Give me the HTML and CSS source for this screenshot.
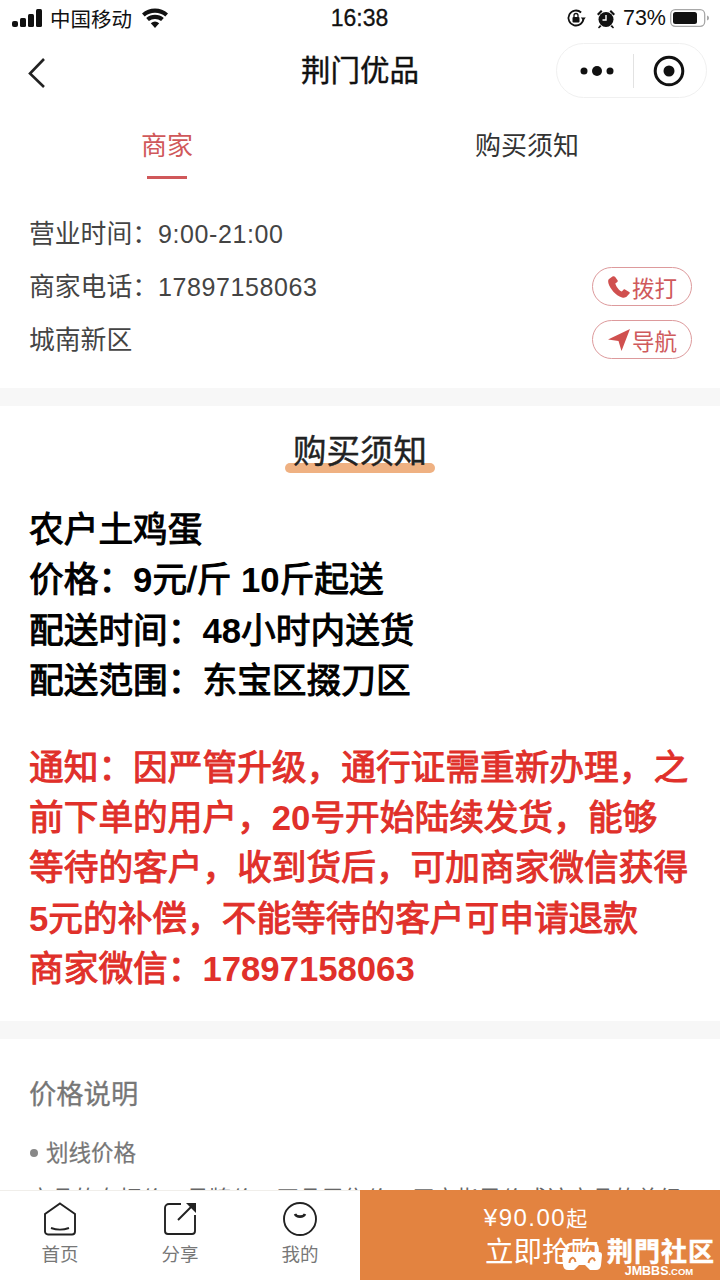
FILE: index.html
```html
<!DOCTYPE html>
<html lang="zh-CN">
<head>
  <meta charset="UTF-8" />
  <meta name="viewport" content="width=device-width, initial-scale=1" />
  <title>荆门优品</title>
  <link rel="stylesheet" href="styles.css">
</head>
<body>

  <div class="statusbar">
    <div class="status-left">
      <svg class="signal" width="30" height="18" viewBox="0 0 30 18">
        <rect x="0" y="12" width="6" height="6" rx="2" />
        <rect x="8" y="9" width="6" height="9" rx="1.500" />
        <rect x="16" y="5" width="6" height="13" rx="1.500" />
        <rect x="24" y="0" width="6" height="18" rx="1.500" />
      </svg>
      <span>中国移动</span>
      <svg class="wifi" width="28" height="20" viewBox="0 0 28 20">
        <path d="M14 20l-4.200-4.700a6.500 6.500 0 0 1 8.400 0z" />
        <path d="M7.900 13.100l-2.700-3a13.500 13.500 0 0 1 17.600 0l-2.700 3a9.500 9.500 0 0 0-12.200 0z" />
        <path d="M3.700 8.400L1 5.400a20 20 0 0 1 26 0l-2.700 3a16 16 0 0 0-20.600 0z" />
      </svg>
    </div>
    <div class="status-time">16:38</div>
    <div class="status-right">
      <svg width="20" height="20" viewBox="0 0 20 20">
        <path d="M17.500 10a7.500 7.500 0 1 1-2.400-5.500" fill="none" stroke="#111" stroke-width="1.800" />
        <path d="M19.800 9.500h-5l2.500 3z" fill="#111" />
        <rect x="6.500" y="9" width="7" height="5.500" rx="1" fill="#111" />
        <path d="M8 9V7.500a2 2 0 0 1 4 0V9" fill="none" stroke="#111" stroke-width="1.300" />
      </svg>
      <svg class="alarm" width="20" height="21" viewBox="0 0 20 21">
        <circle cx="10" cy="11.500" r="7.500" fill="#111" />
        <path d="M1 6l4-4 1.500 1.500-4 4zM19 6l-4-4-1.500 1.500 4 4zM4 17l-2 2.500 1 1 2.500-2.200zM16 17l2 2.500-1 1-2.500-2.200z" fill="#111" />
        <path d="M10 7v5H6.500" fill="none" stroke="#fff" stroke-width="1.400" />
      </svg>
      <span>73%</span>
      <svg width="40" height="18" viewBox="0 0 40 18">
        <rect x="0.700" y="0.700" width="34" height="16.600" rx="4.500" fill="none" stroke="#a8a8a8" stroke-width="1.300" />
        <rect x="3" y="3" width="24" height="12" rx="2.500" fill="#111" />
        <path d="M37 6.500c1.500.4 2 1.300 2 2.500s-.5 2.100-2 2.500z" fill="#a8a8a8" />
      </svg>
    </div>
  </div>

  <div class="navbar">
    <svg class="back" width="20" height="32" viewBox="0 0 20 32">
      <path d="M17 2L3 16.500 17 30" fill="none" stroke="#222" stroke-width="2.600" />
    </svg>
    <div class="nav-title">荆门优品</div>
    <div class="capsule">
      <svg width="34" height="14" viewBox="0 0 34 14">
        <circle cx="4" cy="7" r="3.500" />
        <circle cx="17" cy="7" r="5" />
        <circle cx="30" cy="7" r="3.500" />
      </svg>
      <span class="capsule-line"></span>
      <svg width="32" height="32" viewBox="0 0 32 32">
        <circle cx="16" cy="16" r="13.800" fill="none" stroke="#111" stroke-width="3" />
        <circle cx="16" cy="16" r="5.500" />
      </svg>
    </div>
  </div>

  <div class="tabs">
    <div class="tab active">商家</div>
    <div class="tab">购买须知</div>
  </div>

  <section class="info">
    <div class="info-row">
      <span>营业时间<b class="colon">：</b><i>9:00-21:00</i></span>
    </div>
    <div class="info-row">
      <span>商家电话<b class="colon">：</b><i>17897158063</i></span>
      <button class="pill">
        <svg width="24" height="24" viewBox="0 0 24 24">
          <path d="M5.500 1.500L2 4c-1 .9-1 2.500-.5 4.500 1.500 5 7 12 13.500 14 2 .6 3.700.2 4.800-.9l2.700-3c.5-.6.3-1.200-.3-1.600l-4.200-2.500c-.6-.3-1.100-.2-1.500.2l-1.700 1.800c-3-1.200-5.800-5.200-6.500-8l2-1.400c.5-.4.600-.9.400-1.500L8.200 2c-.4-.8-1.900-1.100-2.700-.5z" />
        </svg>
        <span>拨打</span>
      </button>
    </div>
    <div class="info-row">
      <span>城南新区</span>
      <button class="pill">
        <svg width="24" height="24" viewBox="0 0 24 24">
          <path d="M23 1L1 11.500l10.500 1.500 3 10z" />
        </svg>
        <span>导航</span>
      </button>
    </div>
  </section>

  <section class="notice">
    <h2 class="notice-title"><span>购买须知</span></h2>
    <p class="notice-text">农户土鸡蛋<br>价格<b class="colon">：</b><b class="num">9</b>元/斤 <b class="num">10</b>斤起送<br>配送时间<b class="colon">：</b><b class="num">48</b>小时内送货<br>配送范围<b class="colon">：</b>东宝区掇刀区</p>
    <p class="notice-text red">通知<b class="colon">：</b>因严管升级，通行证需重新办理，之<br>前下单的用户，<b class="num">20</b>号开始陆续发货，能够<br>等待的客户，收到货后，可加商家微信获得<br><b class="num">5</b>元的补偿，不能等待的客户可申请退款<br>商家微信<b class="colon">：</b><b class="num">17897158063</b></p>
  </section>

  <section class="price-note">
    <h3>价格说明</h3>
    <div class="bullet">划线价格</div>
    <p>商品的专柜价、吊牌价、正品零售价、厂商指导价或该商品的曾经</p>
  </section>

  <div class="bottombar">
    <div class="bottom-links">
      <div class="bottom-link">
        <svg width="34" height="34" viewBox="0 0 34 34">
          <path d="M17 1.500L32 12v17.500a3 3 0 0 1-3 3H5a3 3 0 0 1-3-3V12z" />
          <path d="M8 26c5.500 2 12.500 2 18 0" />
        </svg>
        <span>首页</span>
      </div>
      <div class="bottom-link">
        <svg width="34" height="34" viewBox="0 0 34 34">
          <path d="M18 2H6a4 4 0 0 0-4 4v23a3 3 0 0 0 3 3h24a3 3 0 0 0 3-3V13" />
          <path d="M15 18L29 4" />
          <path class="solid" d="M23 1h10v10z" />
        </svg>
        <span>分享</span>
      </div>
      <div class="bottom-link">
        <svg width="34" height="34" viewBox="0 0 34 34">
          <circle cx="17" cy="17" r="16" />
          <path class="thick" d="M12 12c1.500 3.500 8.500 3.500 10 0" />
        </svg>
        <span>我的</span>
      </div>
    </div>
    <div class="buy">
      <div class="buy-price">¥90.00<small>起</small></div>
      <div class="buy-label">立即抢购</div>
    </div>
  </div>

  <div class="watermark">
    <svg width="40" height="29" viewBox="0 0 40 29">
      <path d="M4.500 11V7q0-5 5-5h21q5 0 5 5v4" fill="none" stroke="#fff" stroke-width="2.500" />
      <path d="M0 13q0-3 3-3h34q3 0 3 3l-1 10q-.5 5-5 5h-6l-5-5h-6l-5 5H6q-4.500 0-5-5z" fill="#fff" />
      <path d="M7.500 21c0-3.500 2-5 3.500-5.500M11 15.500c1.500 1 2.500 3 2.500 4.500M26.500 21c.5-3 2.500-5 5-5M31.500 16l1.500 3" fill="none" stroke="#e38340" stroke-width="2" />
    </svg>
    <div class="watermark-text">
      <b>荆門社区</b>
      <small>JMBBS<span>.COM</span></small>
    </div>
  </div>

</body>
</html>
```

FILE: styles.css
```css
* {
  box-sizing: border-box;
}
body, html {
  margin: 0;
  padding: 0;
  height: 100%;
  overflow: hidden;
  background: #fff;
  font-family: "Liberation Sans", "Noto Sans CJK SC", sans-serif;
  color: #222;
}
body {
  position: relative;
}

/* the reference centres its full-width colon, the TC face does too */
.colon {
  font-family: "Noto Sans CJK TC", sans-serif;
  font-weight: inherit;
  line-height: 0;
}
.num {
  font-weight: 700;
  line-height: 0;
  -webkit-text-stroke: 0;
}

.statusbar {
  height: 36px;
  padding: 0 10px 0 12px;
  display: grid;
  grid-template-columns: 1fr auto 1fr;
  align-items: center;
  font-size: 20.5px;
  color: #111;
}
.status-left {
  display: flex;
  align-items: center;
  gap: 8px;
}
.signal {
  fill: #111;
}
.wifi {
  fill: #111;
  margin-left: 1px;
}
.status-time {
  font-size: 23px;
  margin-right: 3px;
  -webkit-text-stroke: 0.3px #111;
}
.status-right {
  display: flex;
  align-items: center;
  justify-content: flex-end;
  gap: 7px;
  font-size: 21.500px;
}
.alarm {
  margin-left: 3px;
}
.status-right span {
  margin-right: -3px;
}

.navbar {
  height: 72px;
  position: relative;
  display: flex;
  align-items: center;
  justify-content: space-between;
  padding: 0 13px 3px 27px;
}
.back {
  margin-top: 5px;
}
.nav-title {
  position: absolute;
  left: 0;
  right: 0;
  top: 15px;
  text-align: center;
  font-size: 29.500px;
  line-height: 40px;
  color: #111;
  -webkit-text-stroke: 0.4px #111;
}
.capsule {
  width: 151px;
  height: 55px;
  border: 1px solid #f0f0f0;
  border-radius: 28px;
  display: flex;
  align-items: center;
  justify-content: space-between;
  padding: 0 21px 0 23px;
  fill: #111;
}
.capsule-line {
  width: 1px;
  height: 34px;
  background: #e2e2e2;
}

.tabs {
  display: flex;
  height: 76px;
  margin-left: -13px;
  width: 733px;
}
.tab {
  flex: 0 0 360px;
  text-align: center;
  padding-top: 20px;
  font-size: 26px;
  line-height: 36px;
  color: #333;
  position: relative;
}
.tab.active {
  color: #d0585a;
}
.tab.active::after {
  content: "";
  position: absolute;
  left: 50%;
  bottom: 5px;
  width: 40px;
  height: 3px;
  margin-left: -20px;
  background: #d0585a;
}

.info {
  padding: 21px 28px 22px 29px;
  border-bottom: 18px solid #f7f7f7;
  height: 222px;
}
.info-row {
  height: 53px;
  display: flex;
  align-items: center;
  justify-content: space-between;
  font-size: 25.800px;
  color: #444;
}
.info-row i {
  font-style: normal;
  font-size: 25px;
  letter-spacing: 0.6px;
}
.pill {
  width: 100px;
  height: 39px;
  margin-top: 4px;
  padding: 0;
  background: #fff;
  border: 1px solid #dd9a9c;
  border-radius: 20px;
  display: flex;
  align-items: center;
  justify-content: center;
  gap: 1px;
  font-family: inherit;
  font-size: 22.500px;
  color: #cf5a5c;
  fill: #d0504f;
}

.notice {
  height: 633px;
  padding: 24px 29px 0;
  border-bottom: 18px solid #f7f7f7;
}
.notice-title {
  margin: 0;
  text-align: center;
  font-size: 33.500px;
  line-height: 44px;
  font-weight: 400;
  color: #222;
  -webkit-text-stroke: 0.4px #222;
}
.notice-title span {
  display: inline-block;
  position: relative;
  z-index: 0;
}
.notice-title span::after {
  content: "";
  position: absolute;
  z-index: -1;
  left: -8px;
  right: -8px;
  bottom: 1px;
  height: 10px;
  border-radius: 5px;
  background: #efb182;
}
.notice-text {
  margin: 31px 0 0;
  font-size: 34.700px;
  line-height: 50.400px;
  color: #000;
  -webkit-text-stroke: 1px #000;
}
.notice-text.red {
  margin-top: 36px;
  color: #e0302a;
  -webkit-text-stroke-color: #e0302a;
}
.notice-text .num {
  -webkit-text-stroke: 0;
}

.price-note {
  height: 151px;
  overflow: hidden;
  padding: 37px 29px 0;
}
.price-note h3 {
  margin: 0;
  font-size: 27.300px;
  line-height: 38px;
  font-weight: 400;
  color: #777;
  -webkit-text-stroke: 0.3px #777;
}
.bullet {
  margin-top: 22px;
  font-size: 22.500px;
  line-height: 36px;
  color: #777;
  -webkit-text-stroke: 0.2px #777;
}
.bullet::before {
  content: "";
  display: inline-block;
  width: 8px;
  height: 8px;
  margin: 0 8px 0 1px;
  vertical-align: 4px;
  border-radius: 50%;
  background: #888;
}
.price-note p {
  margin: 10px 0 0;
  font-size: 22.500px;
  line-height: 36px;
  white-space: nowrap;
  color: #666;
}

.bottombar {
  position: absolute;
  left: 0;
  right: 0;
  bottom: 0;
  height: 90px;
  display: flex;
  background: #fff;
  border-top: 1px solid #f0eeea;
}
.bottom-links {
  width: 360px;
  display: flex;
}
.bottom-link {
  width: 120px;
  display: flex;
  flex-direction: column;
  align-items: center;
  padding-top: 11px;
  font-size: 18.500px;
  line-height: 26px;
  color: #777;
}
.bottom-link svg {
  fill: none;
  stroke: #222;
  stroke-width: 1.900;
  margin-bottom: 6px;
}
.bottom-link .solid {
  fill: #222;
  stroke: none;
}
.bottom-link .thick {
  stroke-width: 2.600;
}
.buy {
  width: 360px;
  margin-top: -1px;
  background: #e38340;
  color: #fff;
  text-align: center;
  padding-top: 12px;
}
.buy-price {
  font-size: 24px;
  line-height: 32px;
  letter-spacing: 1.500px;
  margin-right: 9px;
}
.buy-price small {
  font-size: 21px;
  letter-spacing: 0;
}
.buy-label {
  font-size: 28.500px;
  line-height: 40px;
  margin: -3px 0 0 4px;
}

.watermark {
  position: absolute;
  left: 562px;
  top: 1242px;
  display: flex;
  gap: 5px;
  color: #fff;
}
.watermark-text {
  display: flex;
  flex-direction: column;
  align-items: center;
  margin-top: -3px;
}
.watermark-text b {
  font-size: 26px;
  line-height: 26px;
  font-weight: 700;
  letter-spacing: 1px;
  -webkit-text-stroke: 0.5px #fff;
}
.watermark-text small {
  font-size: 12.500px;
  line-height: 12px;
  font-weight: 700;
  margin-right: 4px;
}
.watermark-text small span {
  font-size: 9.500px;
}
```
